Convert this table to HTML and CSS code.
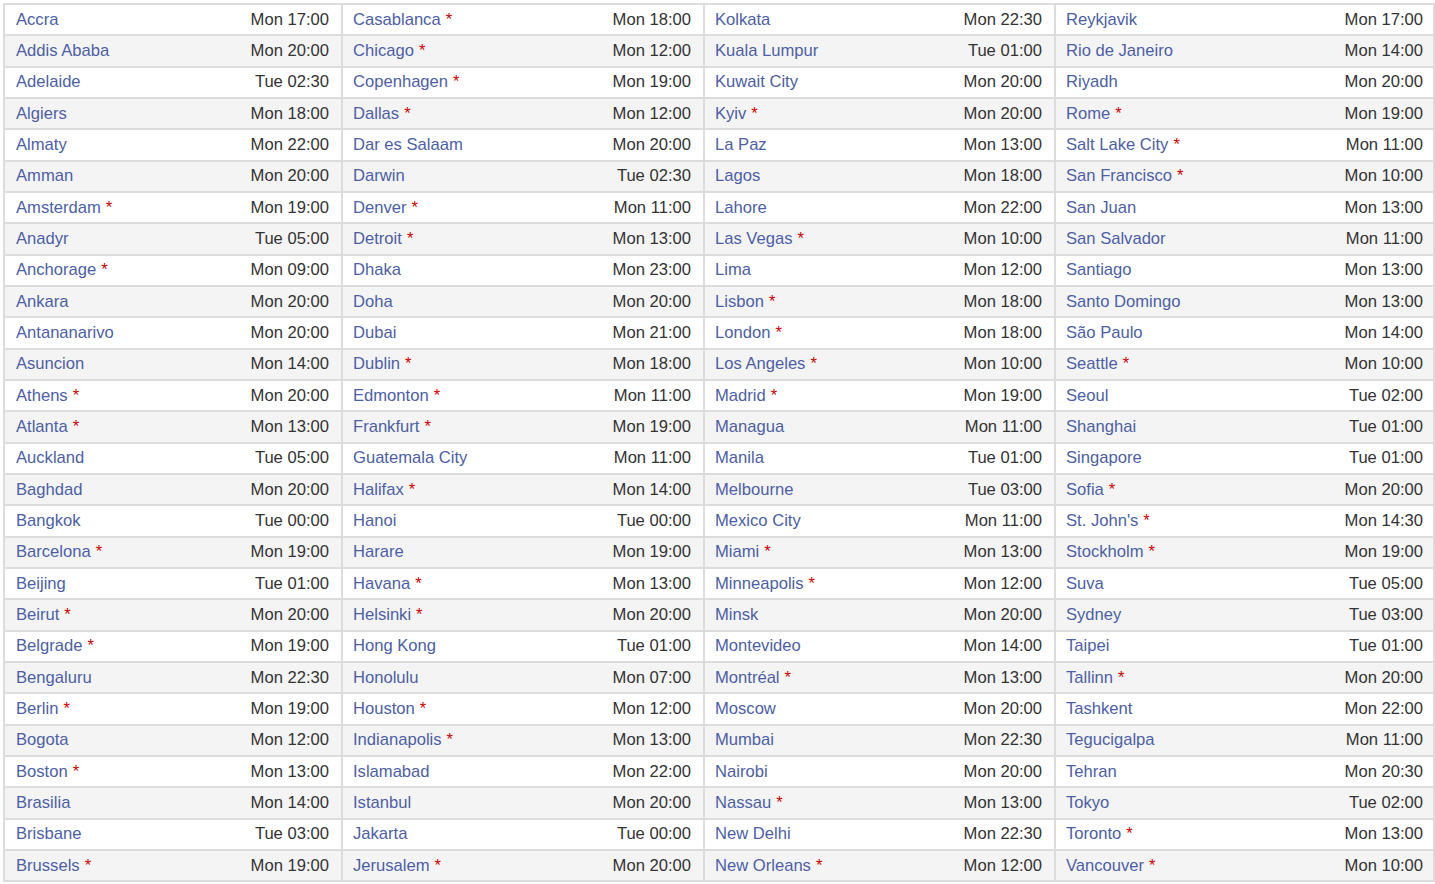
FILE: index.html
```html
<!DOCTYPE html>
<html lang="en">
<head>
<meta charset="utf-8">
<title>World Clock</title>
<link rel="stylesheet" href="styles.css">
</head>
<body>
<div class="clock">
<div class="row"><a class="city">Accra</a><span class="time">Mon 17:00</span><a class="city">Casablanca <i>*</i></a><span class="time">Mon 18:00</span><a class="city">Kolkata</a><span class="time">Mon 22:30</span><a class="city">Reykjavik</a><span class="time">Mon 17:00</span></div>
<div class="row"><a class="city">Addis Ababa</a><span class="time">Mon 20:00</span><a class="city">Chicago <i>*</i></a><span class="time">Mon 12:00</span><a class="city">Kuala Lumpur</a><span class="time">Tue 01:00</span><a class="city">Rio de Janeiro</a><span class="time">Mon 14:00</span></div>
<div class="row"><a class="city">Adelaide</a><span class="time">Tue 02:30</span><a class="city">Copenhagen <i>*</i></a><span class="time">Mon 19:00</span><a class="city">Kuwait City</a><span class="time">Mon 20:00</span><a class="city">Riyadh</a><span class="time">Mon 20:00</span></div>
<div class="row"><a class="city">Algiers</a><span class="time">Mon 18:00</span><a class="city">Dallas <i>*</i></a><span class="time">Mon 12:00</span><a class="city">Kyiv <i>*</i></a><span class="time">Mon 20:00</span><a class="city">Rome <i>*</i></a><span class="time">Mon 19:00</span></div>
<div class="row"><a class="city">Almaty</a><span class="time">Mon 22:00</span><a class="city">Dar es Salaam</a><span class="time">Mon 20:00</span><a class="city">La Paz</a><span class="time">Mon 13:00</span><a class="city">Salt Lake City <i>*</i></a><span class="time">Mon 11:00</span></div>
<div class="row"><a class="city">Amman</a><span class="time">Mon 20:00</span><a class="city">Darwin</a><span class="time">Tue 02:30</span><a class="city">Lagos</a><span class="time">Mon 18:00</span><a class="city">San Francisco <i>*</i></a><span class="time">Mon 10:00</span></div>
<div class="row"><a class="city">Amsterdam <i>*</i></a><span class="time">Mon 19:00</span><a class="city">Denver <i>*</i></a><span class="time">Mon 11:00</span><a class="city">Lahore</a><span class="time">Mon 22:00</span><a class="city">San Juan</a><span class="time">Mon 13:00</span></div>
<div class="row"><a class="city">Anadyr</a><span class="time">Tue 05:00</span><a class="city">Detroit <i>*</i></a><span class="time">Mon 13:00</span><a class="city">Las Vegas <i>*</i></a><span class="time">Mon 10:00</span><a class="city">San Salvador</a><span class="time">Mon 11:00</span></div>
<div class="row"><a class="city">Anchorage <i>*</i></a><span class="time">Mon 09:00</span><a class="city">Dhaka</a><span class="time">Mon 23:00</span><a class="city">Lima</a><span class="time">Mon 12:00</span><a class="city">Santiago</a><span class="time">Mon 13:00</span></div>
<div class="row"><a class="city">Ankara</a><span class="time">Mon 20:00</span><a class="city">Doha</a><span class="time">Mon 20:00</span><a class="city">Lisbon <i>*</i></a><span class="time">Mon 18:00</span><a class="city">Santo Domingo</a><span class="time">Mon 13:00</span></div>
<div class="row"><a class="city">Antananarivo</a><span class="time">Mon 20:00</span><a class="city">Dubai</a><span class="time">Mon 21:00</span><a class="city">London <i>*</i></a><span class="time">Mon 18:00</span><a class="city">São Paulo</a><span class="time">Mon 14:00</span></div>
<div class="row"><a class="city">Asuncion</a><span class="time">Mon 14:00</span><a class="city">Dublin <i>*</i></a><span class="time">Mon 18:00</span><a class="city">Los Angeles <i>*</i></a><span class="time">Mon 10:00</span><a class="city">Seattle <i>*</i></a><span class="time">Mon 10:00</span></div>
<div class="row"><a class="city">Athens <i>*</i></a><span class="time">Mon 20:00</span><a class="city">Edmonton <i>*</i></a><span class="time">Mon 11:00</span><a class="city">Madrid <i>*</i></a><span class="time">Mon 19:00</span><a class="city">Seoul</a><span class="time">Tue 02:00</span></div>
<div class="row"><a class="city">Atlanta <i>*</i></a><span class="time">Mon 13:00</span><a class="city">Frankfurt <i>*</i></a><span class="time">Mon 19:00</span><a class="city">Managua</a><span class="time">Mon 11:00</span><a class="city">Shanghai</a><span class="time">Tue 01:00</span></div>
<div class="row"><a class="city">Auckland</a><span class="time">Tue 05:00</span><a class="city">Guatemala City</a><span class="time">Mon 11:00</span><a class="city">Manila</a><span class="time">Tue 01:00</span><a class="city">Singapore</a><span class="time">Tue 01:00</span></div>
<div class="row"><a class="city">Baghdad</a><span class="time">Mon 20:00</span><a class="city">Halifax <i>*</i></a><span class="time">Mon 14:00</span><a class="city">Melbourne</a><span class="time">Tue 03:00</span><a class="city">Sofia <i>*</i></a><span class="time">Mon 20:00</span></div>
<div class="row"><a class="city">Bangkok</a><span class="time">Tue 00:00</span><a class="city">Hanoi</a><span class="time">Tue 00:00</span><a class="city">Mexico City</a><span class="time">Mon 11:00</span><a class="city">St. John's <i>*</i></a><span class="time">Mon 14:30</span></div>
<div class="row"><a class="city">Barcelona <i>*</i></a><span class="time">Mon 19:00</span><a class="city">Harare</a><span class="time">Mon 19:00</span><a class="city">Miami <i>*</i></a><span class="time">Mon 13:00</span><a class="city">Stockholm <i>*</i></a><span class="time">Mon 19:00</span></div>
<div class="row"><a class="city">Beijing</a><span class="time">Tue 01:00</span><a class="city">Havana <i>*</i></a><span class="time">Mon 13:00</span><a class="city">Minneapolis <i>*</i></a><span class="time">Mon 12:00</span><a class="city">Suva</a><span class="time">Tue 05:00</span></div>
<div class="row"><a class="city">Beirut <i>*</i></a><span class="time">Mon 20:00</span><a class="city">Helsinki <i>*</i></a><span class="time">Mon 20:00</span><a class="city">Minsk</a><span class="time">Mon 20:00</span><a class="city">Sydney</a><span class="time">Tue 03:00</span></div>
<div class="row"><a class="city">Belgrade <i>*</i></a><span class="time">Mon 19:00</span><a class="city">Hong Kong</a><span class="time">Tue 01:00</span><a class="city">Montevideo</a><span class="time">Mon 14:00</span><a class="city">Taipei</a><span class="time">Tue 01:00</span></div>
<div class="row"><a class="city">Bengaluru</a><span class="time">Mon 22:30</span><a class="city">Honolulu</a><span class="time">Mon 07:00</span><a class="city">Montréal <i>*</i></a><span class="time">Mon 13:00</span><a class="city">Tallinn <i>*</i></a><span class="time">Mon 20:00</span></div>
<div class="row"><a class="city">Berlin <i>*</i></a><span class="time">Mon 19:00</span><a class="city">Houston <i>*</i></a><span class="time">Mon 12:00</span><a class="city">Moscow</a><span class="time">Mon 20:00</span><a class="city">Tashkent</a><span class="time">Mon 22:00</span></div>
<div class="row"><a class="city">Bogota</a><span class="time">Mon 12:00</span><a class="city">Indianapolis <i>*</i></a><span class="time">Mon 13:00</span><a class="city">Mumbai</a><span class="time">Mon 22:30</span><a class="city">Tegucigalpa</a><span class="time">Mon 11:00</span></div>
<div class="row"><a class="city">Boston <i>*</i></a><span class="time">Mon 13:00</span><a class="city">Islamabad</a><span class="time">Mon 22:00</span><a class="city">Nairobi</a><span class="time">Mon 20:00</span><a class="city">Tehran</a><span class="time">Mon 20:30</span></div>
<div class="row"><a class="city">Brasilia</a><span class="time">Mon 14:00</span><a class="city">Istanbul</a><span class="time">Mon 20:00</span><a class="city">Nassau <i>*</i></a><span class="time">Mon 13:00</span><a class="city">Tokyo</a><span class="time">Tue 02:00</span></div>
<div class="row"><a class="city">Brisbane</a><span class="time">Tue 03:00</span><a class="city">Jakarta</a><span class="time">Tue 00:00</span><a class="city">New Delhi</a><span class="time">Mon 22:30</span><a class="city">Toronto <i>*</i></a><span class="time">Mon 13:00</span></div>
<div class="row"><a class="city">Brussels <i>*</i></a><span class="time">Mon 19:00</span><a class="city">Jerusalem <i>*</i></a><span class="time">Mon 20:00</span><a class="city">New Orleans <i>*</i></a><span class="time">Mon 12:00</span><a class="city">Vancouver <i>*</i></a><span class="time">Mon 10:00</span></div>
</div>
</body>
</html>
```
FILE: styles.css
```css
html, body {
  margin: 0;
  padding: 0;
  background: #fff;
}
body {
  font-family: "Liberation Sans", Arial, sans-serif;
  font-size: 16.6px;
  color: #333;
}
.clock {
  display: flex;
  flex-direction: column;
  width: 1432px;
  margin: 3px 0 0 3px;
  border-top: 2px solid #dcdcdc;
}
.row {
  display: grid;
  grid-template-columns: 238px 100px 262px 100px 251px 100px 281px 100px;
  height: 31.34px;
  box-sizing: border-box;
  border-bottom: 2px solid #dcdcdc;
  align-items: center;
  background: #fff;
}
.row:nth-child(even) {
  background: #f4f4f4;
}
.city {
  box-sizing: border-box;
  height: 100%;
  display: flex;
  align-items: center;
  border-left: 2px solid #dcdcdc;
  padding-left: 10px;
  color: #4c5fa6;
  text-decoration: none;
  white-space: nowrap;
}
.city:first-child {
  padding-left: 11px;
}
.city i {
  font-style: normal;
  color: #d00000;
  margin-left: 5px;
}
.time {
  box-sizing: border-box;
  text-align: right;
  padding-right: 12px;
  white-space: nowrap;
}
.time:last-child {
  height: 100%;
  display: flex;
  align-items: center;
  justify-content: flex-end;
  padding-right: 10px;
  border-right: 2px solid #dcdcdc;
}
```
